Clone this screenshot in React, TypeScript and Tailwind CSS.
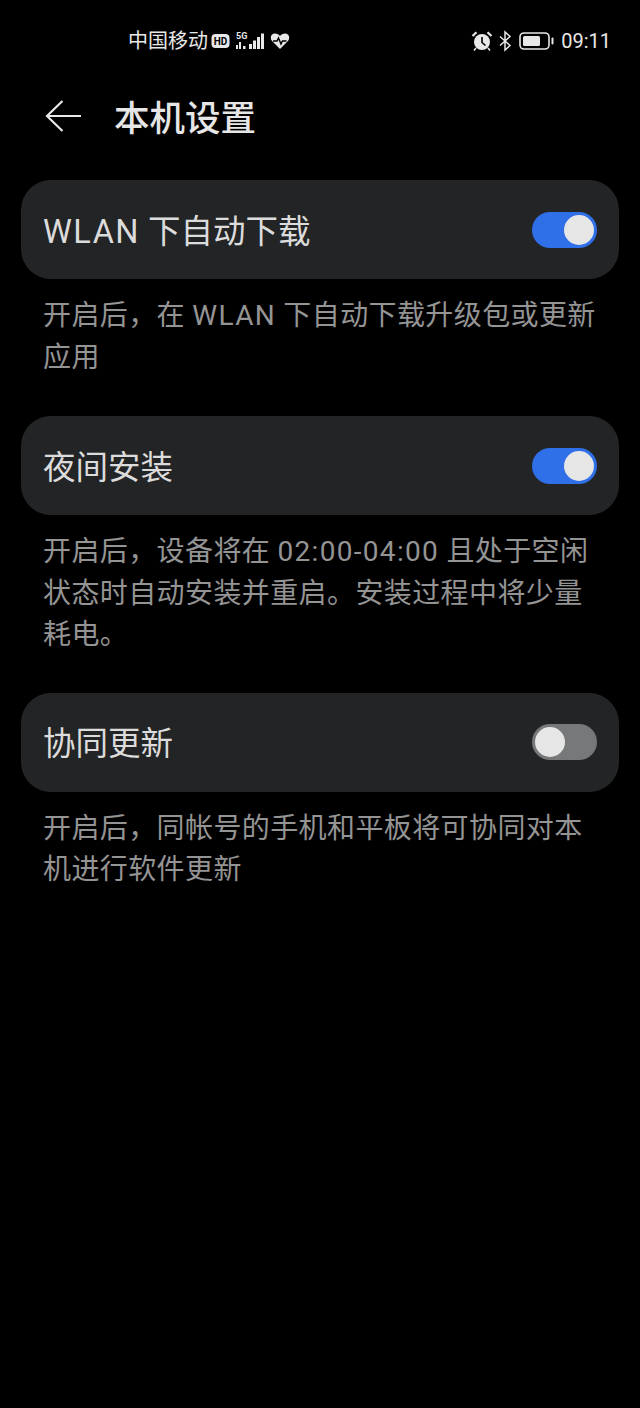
import React from 'react';

const FONT = '"Roboto", "Noto Sans CJK SC", sans-serif';

const sections = [
  {
    title: 'WLAN 下自动下载',
    on: true,
    lines: ['开启后，在 WLAN 下自动下载升级包或更新', '应用'],
  },
  {
    title: '夜间安装',
    on: true,
    lines: ['开启后，设备将在 02:00-04:00 且处于空闲', '状态时自动安装并重启。安装过程中将少量', '耗电。'],
  },
  {
    title: '协同更新',
    on: false,
    lines: ['开启后，同帐号的手机和平板将可协同对本', '机进行软件更新'],
  },
];

// latin runs sit wider in the reference than plain Roboto
const Spaced = ({ text, className }: { text: string; className: string }) => (
  <>
    {text.split(/([A-Za-z0-9:-]+)/).map((part, i) =>
      i % 2 === 1 ? (
        <span key={i} className={className}>{part}</span>
      ) : (
        <span key={i}>{part}</span>
      ),
    )}
  </>
);

const Toggle = ({ on }: { on: boolean }) => (
  <div
    className={`flex h-[36px] w-[65px] items-center rounded-full px-[3px] ${
      on ? 'justify-end bg-[#2f6fe8]' : 'justify-start bg-[#76787a]'
    }`}
  >
    <div className="h-[30px] w-[30px] rounded-full bg-[#e6e6e6]" />
  </div>
);

const StatusLeft = () => (
  <div className="flex items-center text-[#e8e8e8]">
    <span className="text-[20px] leading-[24px]">中国移动</span>
    <svg width="19" height="16" viewBox="0 0 19 16" className="ml-[3px]">
      <rect x="0.5" y="1" width="18" height="14" rx="4" fill="#e8e8e8" />
      <text x="9.5" y="12" textAnchor="middle" fontSize="10" fontWeight="700" fill="#000" fontFamily="Roboto, sans-serif">HD</text>
    </svg>
    <svg width="31" height="20" viewBox="0 0 31 20" className="ml-[5px]" fill="#e8e8e8">
      <text x="1" y="8" fontSize="9" fontWeight="700" fontFamily="Roboto, sans-serif">5G</text>
      <rect x="1" y="14" width="2" height="4" />
      <rect x="4" y="11" width="2" height="7" />
      <rect x="8" y="15" width="2.500" height="3" />
      <rect x="14" y="13" width="3" height="5" />
      <rect x="18" y="9.500" width="3" height="8.500" />
      <rect x="22" y="6" width="3" height="12" />
      <rect x="26" y="2.500" width="3" height="15.500" />
    </svg>
    <svg width="20" height="18" viewBox="0 0 20 18" className="ml-[4px]">
      <path d="M10 17 2 9C-.5 6 1 1.500 5 1.500c2 0 4 1 5 2.500 1-1.500 3-2.500 5-2.500 4 0 5.500 4.500 3 7.500Z" fill="#e8e8e8" />
      <path d="M3 9h4l1.500-3 2.500 6 1.500-3h4" fill="none" stroke="#000" strokeWidth="1.400" />
    </svg>
  </div>
);

const StatusRight = () => (
  <div className="flex items-center text-[#e8e8e8]">
    <svg width="22" height="22" viewBox="0 0 22 22">
      <circle cx="11" cy="12" r="8" fill="#e8e8e8" />
      <path d="M11 7v5.500l3.500 3" fill="none" stroke="#000" strokeWidth="1.600" />
      <path d="M1.500 6 5.500 2.200M20.500 6l-4-3.800" stroke="#e8e8e8" strokeWidth="2.200" />
      <path d="m5 18-2 2.500M17 18l2 2.500" stroke="#e8e8e8" strokeWidth="1.600" />
    </svg>
    <svg width="14" height="22" viewBox="0 0 14 22" className="ml-[5px]">
      <path d="M2 6.500 12 15.500 7 20V2l5 4.500L2 15.500" fill="none" stroke="#e8e8e8" strokeWidth="1.500" />
    </svg>
    <svg width="35" height="18" viewBox="0 0 35 18" className="ml-[7px]">
      <rect x="1" y="1" width="29" height="16" rx="4" fill="none" stroke="#e8e8e8" strokeWidth="1.600" />
      <rect x="4" y="4" width="17" height="10" rx="1.500" fill="#e8e8e8" />
      <rect x="32.500" y="5.500" width="2" height="7" rx="1" fill="#e8e8e8" />
    </svg>
    <span className="ml-[7px] text-[20px] leading-[24px]">09:11</span>
  </div>
);

const App: React.FC = () => {
  return (
    <div className="h-[1408px] w-[640px] overflow-hidden bg-black" style={{ fontFamily: FONT }}>
      {/* status bar */}
      <div className="flex items-center justify-between pl-[128px] pr-[29px] pt-[29px]">
        <StatusLeft />
        <StatusRight />
      </div>

      {/* header */}
      <div className="mt-[43px] flex items-center pl-[45px]">
        <svg width="38" height="34" viewBox="0 0 38 34" fill="none" stroke="#e8e8e8" strokeWidth="2.200" className="mb-[6px]">
          <path d="M17.500 2 2 17l15.500 15M2 17h34" />
        </svg>
        <h1 className="ml-[31px] text-[35.500px] font-medium leading-[46px] text-[#e6e6e6]">本机设置</h1>
      </div>

      {/* settings */}
      <div className="mt-[38px] flex flex-col px-[21px]">
        {sections.map((s, i) => (
          <div key={i} className={i === 0 ? '' : i === 1 ? 'mt-[38px]' : 'mt-[37px]'}>
            <div className="flex h-[99px] items-center justify-between rounded-[30px] bg-[#232425] pl-[22px] pr-[22px]">
              <span className="mt-[4px] whitespace-pre text-[32.500px] leading-[40px] text-[#dcdcdc]">
                <Spaced text={s.title} className="tracking-[1.500px]" />
              </span>
              <Toggle on={s.on} />
            </div>
            <div className="mt-[16px] px-[22px] text-[28px] leading-[41.500px] tracking-[0.4px] text-[#949494]">
              {s.lines.map((line) => (
                <div key={line} className="whitespace-pre">
                  <Spaced text={line} className="tracking-[1.300px]" />
                </div>
              ))}
            </div>
          </div>
        ))}
      </div>
    </div>
  );
};

export default App;
